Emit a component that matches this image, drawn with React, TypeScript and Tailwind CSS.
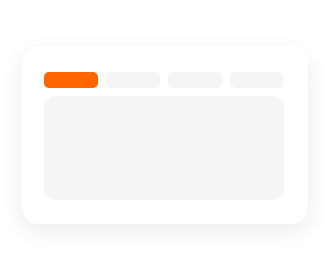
export default function App() {
  return (
    <div className="h-screen w-full bg-white pl-[22px] pt-[46px]">
      <div className="w-[286px] h-[178px] bg-white rounded-[16px] shadow-[0_8px_24px_rgba(0,0,0,0.08)] pl-[22px] pr-[24px] pt-[26px] pb-[24px] flex flex-col gap-2">
        {/* tabs */}
        <div className="flex gap-2">
          <div className="w-[54px] h-4 rounded-[5px] bg-[#ff6600]" />
          <div className="w-[54px] h-4 rounded-[5px] bg-[#f5f5f5]" />
          <div className="w-[54px] h-4 rounded-[5px] bg-[#f5f5f5]" />
          <div className="w-[54px] h-4 rounded-[5px] bg-[#f5f5f5]" />
        </div>
        <div className="flex-1 rounded-[12px] bg-[#f5f5f5]" />
      </div>
    </div>
  );
}
